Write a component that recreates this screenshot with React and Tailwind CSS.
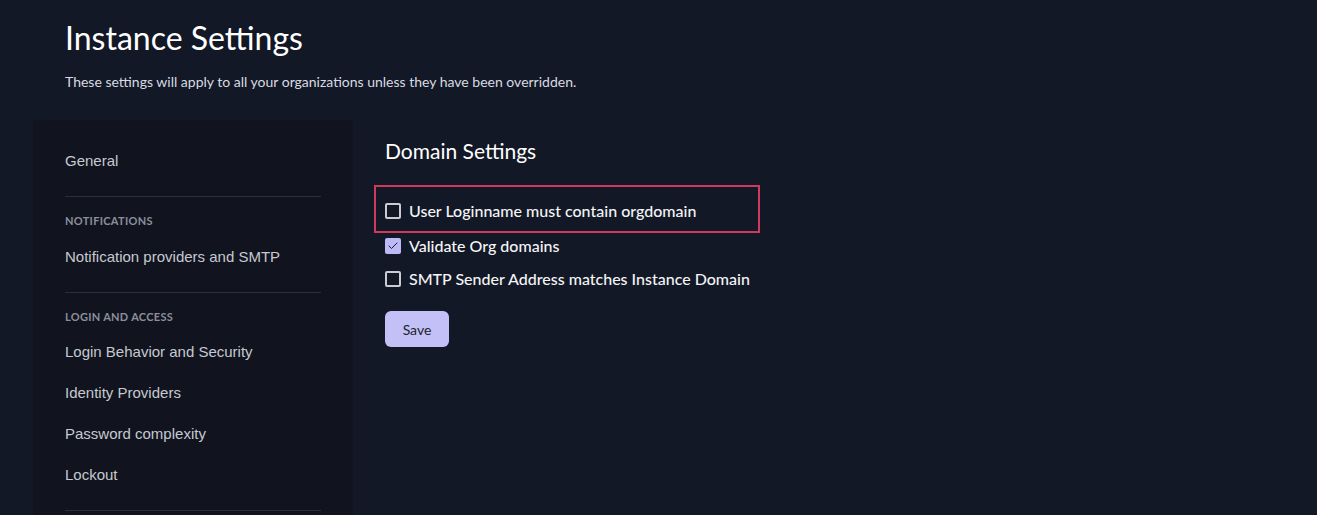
import { Check } from "lucide-react";

const SECTIONS = [
  { items: ["General"] },
  { title: "Notifications", items: ["Notification providers and SMTP"] },
  {
    title: "Login and Access",
    items: ["Login Behavior and Security", "Identity Providers", "Password complexity", "Lockout"],
  },
];

const OPTIONS = [
  { label: "User Loginname must contain orgdomain", checked: false, highlight: true },
  { label: "Validate Org domains", checked: true },
  { label: "SMTP Sender Address matches Instance Domain", checked: false },
];

function Checkbox({ checked }) {
  if (checked) {
    return (
      <span className="flex h-4 w-4 shrink-0 items-center justify-center rounded-[2px] bg-[#bcb9f6]">
        <Check className="h-3 w-3 text-[#1a1d2e]" strokeWidth={2} />
      </span>
    );
  }
  return <span className="h-4 w-4 shrink-0 rounded-[2px] border-2 border-[#c9ccd4]" />;
}

export default function App() {
  return (
    <div className="min-h-[515px] overflow-hidden bg-[#131826] font-['Lato',sans-serif] text-white">
      <div className="px-[65px] pt-[18px]">
        <h1 className="text-[32px] leading-[40px] font-normal">Instance Settings</h1>
        <p className="mt-[13px] text-[14px] text-[#d8dbe2]">
          These settings will apply to all your organizations unless they have been overridden.
        </p>
      </div>

      <div className="mt-[28px] flex pl-[33px]">
        <aside className="h-[400px] w-[320px] shrink-0 bg-[#11141f] px-8 pt-[20px] font-['Liberation_Sans',Arial,sans-serif]">
          {SECTIONS.map((section, i) => (
            <div key={i} className={i > 0 ? "border-t border-[#2a2f3c] pt-[16px]" : ""}>
              {section.title && (
                <div className="mb-[6px] font-['Lato',sans-serif] text-[11px] font-bold tracking-[0.3px] text-[#8b8f9c] uppercase">
                  {section.title}
                </div>
              )}
              <ul className="pb-[15px]">
                {section.items.map((item) => (
                  <li key={item} className="py-[10px] text-[15px] leading-[21px] text-[#c6c9d0]">
                    {item}
                  </li>
                ))}
              </ul>
            </div>
          ))}
          <div className="border-t border-[#2a2f3c]" />
        </aside>

        <main className="pl-8 pt-[18px]">
          <h2 className="text-[21px] leading-[26px] font-normal">Domain Settings</h2>
          <div className="mt-[21px] flex flex-col">
            {OPTIONS.map((opt) => (
              <label
                key={opt.label}
                className={
                  opt.highlight
                    ? "-mx-[11px] mb-[-4px] flex h-[48px] w-[386px] items-center gap-2 border-2 border-[#cf3a5c] px-[9px] pt-[4px]"
                    : "flex h-[33px] items-center gap-2"
                }
              >
                <Checkbox checked={opt.checked} />
                <span className="text-[16px] font-medium text-[#f3f4f6]">{opt.label}</span>
              </label>
            ))}
          </div>
          <button className="mt-[16px] h-9 w-16 rounded-md bg-[#c3c0f8] text-[14px] text-[#1c1f2b]">Save</button>
        </main>
      </div>
    </div>
  );
}
